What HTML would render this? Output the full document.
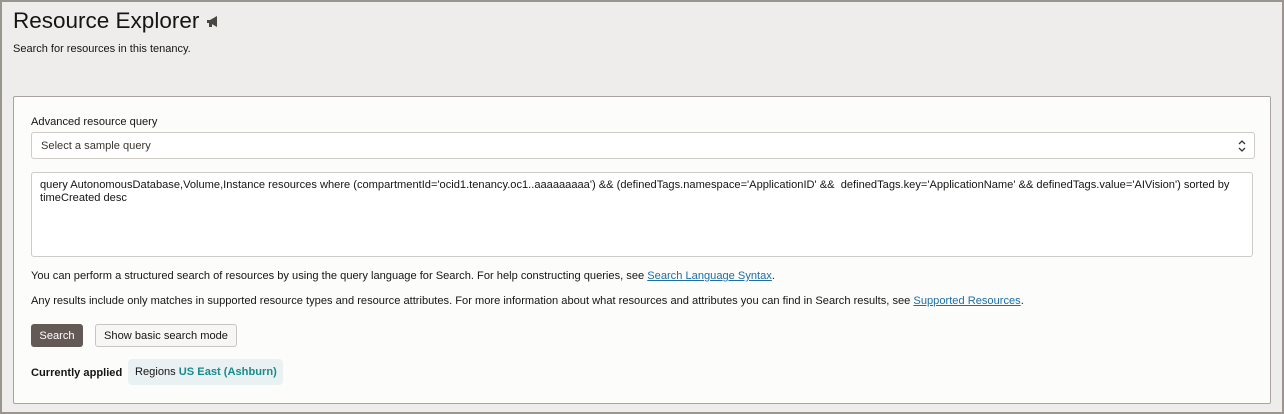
<!DOCTYPE html>
<html><head><style>
html,body{margin:0;padding:0}
body{width:1284px;height:414px;position:relative;overflow:hidden;background:#efedeb;font-family:"Liberation Sans",Arial,sans-serif;color:#161513}
.frame{position:absolute;left:0;top:0;width:1280px;height:410px;border:2px solid #9b9590}
h1{position:absolute;left:13px;top:8px;margin:0;font-weight:normal;font-size:22.5px;color:#161513;white-space:nowrap}
.sub{position:absolute;left:13px;top:43px;font-size:11px}
.card{position:absolute;left:13px;top:96px;width:1256px;height:306px;background:#fcfcfb;border:1px solid #a9a4a0;border-radius:2px}
.abs{position:absolute;font-size:11.1px;white-space:nowrap}
.sel{position:absolute;left:17px;top:35px;width:1222px;height:25px;border:1px solid #cfcbc7;border-radius:3px;background:#fff;font-size:11.1px;line-height:27px;color:#3a3631;text-indent:9px}
.ta{position:absolute;left:17px;top:75px;width:1222px;height:85px;border:1px solid #cfcbc7;border-radius:3px;background:#fff;font-size:11.1px;line-height:13px;padding:6px 8px;box-sizing:border-box;color:#161513}
a{color:#1d6fa5;text-decoration:underline}
.btn{position:absolute;top:227px;height:23px;font-size:11.1px;line-height:24px;border-radius:3px;text-align:center;white-space:nowrap}
.chip{position:absolute;left:114px;top:262px;width:155px;height:26px;background:#eaf1f3;border-radius:4px;font-size:11.1px;line-height:27px;text-indent:7px;white-space:nowrap}
</style></head><body>
<div class="frame"></div>
<h1>Resource Explorer <svg width="14" height="12" viewBox="0 0 14 12" style="vertical-align:0"><path d="M1 4h3l7-4v11l-7-4H1z" fill="#4a4641"/><rect x="3" y="7" width="3" height="4" fill="#4a4641"/></svg></h1>
<div class="sub">Search for resources in this tenancy.</div>
<div class="card">
 <div class="abs" style="left:17px;top:19px">Advanced resource query</div>
 <div class="sel">Select a sample query<svg style="position:absolute;right:8px;top:7px" width="8" height="12" viewBox="0 0 8 12"><path d="M1 4l3-3 3 3M1 8l3 3 3-3" fill="none" stroke="#333" stroke-width="1.3"/></svg></div>
 <div class="ta">query AutonomousDatabase,Volume,Instance resources where (compartmentId='ocid1.tenancy.oc1..aaaaaaaaa') &amp;&amp; (definedTags.namespace='ApplicationID' &amp;&amp;&nbsp; definedTags.key='ApplicationName' &amp;&amp; definedTags.value='AIVision') sorted by timeCreated desc</div>
 <div class="abs" style="left:17px;top:173px">You can perform a structured search of resources by using the query language for Search. For help constructing queries, see <a>Search Language Syntax</a>.</div>
 <div class="abs" style="left:17px;top:198px">Any results include only matches in supported resource types and resource attributes. For more information about what resources and attributes you can find in Search results, see <a>Supported Resources</a>.</div>
 <div class="btn" style="left:17px;width:52px;background:#645a55;color:#fff">Search</div>
 <div class="btn" style="left:81px;width:140px;border:1px solid #c9c5c1;background:#f7f6f5;height:21px;line-height:22px">Show basic search mode</div>
 <div class="abs" style="left:17px;top:270px;font-weight:bold">Currently applied</div>
 <div class="chip">Regions <b style="color:#1a8a8a">US East (Ashburn)</b></div>
</div>
</body></html>
